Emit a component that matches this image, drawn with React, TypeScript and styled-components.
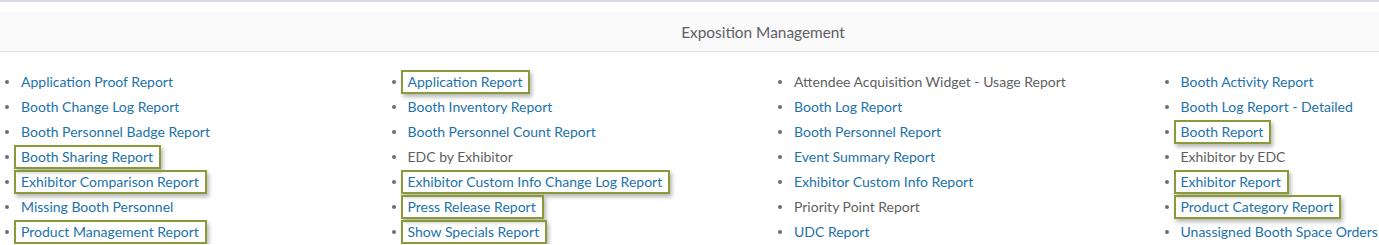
import React from 'react';
import styled, { createGlobalStyle } from 'styled-components';

type Item = { label: string; link?: boolean; marked?: boolean };

const columns: Item[][] = [
  [
    { label: 'Application Proof Report', link: true },
    { label: 'Booth Change Log Report', link: true },
    { label: 'Booth Personnel Badge Report', link: true },
    { label: 'Booth Sharing Report', link: true, marked: true },
    { label: 'Exhibitor Comparison Report', link: true, marked: true },
    { label: 'Missing Booth Personnel', link: true },
    { label: 'Product Management Report', link: true, marked: true },
  ],
  [
    { label: 'Application Report', link: true, marked: true },
    { label: 'Booth Inventory Report', link: true },
    { label: 'Booth Personnel Count Report', link: true },
    { label: 'EDC by Exhibitor' },
    { label: 'Exhibitor Custom Info Change Log Report', link: true, marked: true },
    { label: 'Press Release Report', link: true, marked: true },
    { label: 'Show Specials Report', link: true, marked: true },
  ],
  [
    { label: 'Attendee Acquisition Widget - Usage Report' },
    { label: 'Booth Log Report', link: true },
    { label: 'Booth Personnel Report', link: true },
    { label: 'Event Summary Report', link: true },
    { label: 'Exhibitor Custom Info Report', link: true },
    { label: 'Priority Point Report' },
    { label: 'UDC Report', link: true },
  ],
  [
    { label: 'Booth Activity Report', link: true },
    { label: 'Booth Log Report - Detailed', link: true },
    { label: 'Booth Report', link: true, marked: true },
    { label: 'Exhibitor by EDC' },
    { label: 'Exhibitor Report', link: true, marked: true },
    { label: 'Product Category Report', link: true, marked: true },
    { label: 'Unassigned Booth Space Orders', link: true },
  ],
];

export default function App() {
  return (
    <>
      <GlobalStyle />
      <SPage>
        <SSheet>
          <STopBar />
          <SHeader>Exposition Management</SHeader>
          <SGrid>
            {columns.map((col, i) => (
              <SList key={i}>
                {col.map((item) => (
                  <SItem key={item.label}>
                    <SLabel $link={item.link} $marked={item.marked}>
                      {item.label}
                    </SLabel>
                  </SItem>
                ))}
              </SList>
            ))}
          </SGrid>
        </SSheet>
      </SPage>
    </>
  );
}

const colors = {
  link: '#1c72aa',
  text: '#5f5f5f',
  bullet: '#6a6e72',
  headerBg: '#fafafa',
  headerBorder: '#dedede',
  topBar: '#d6dae3',
  mark: '#8a9a38',
};

const GlobalStyle = createGlobalStyle`
  html, body {
    margin: 0;
    padding: 0;
    background: #ffffff;
    overflow: hidden;
  }
  body {
    font-family: Lato, "Open Sans", sans-serif;
  }
`;

const SPage = styled.div`
  width: 100%;
  overflow: hidden;
`;

const SSheet = styled.div`
  width: 1546px;
`;

const STopBar = styled.div`
  height: 2px;
  background: ${colors.topBar};
  margin-bottom: 10px;
`;

const SHeader = styled.div`
  width: 1526px;
  height: 40px;
  box-sizing: border-box;
  background: ${colors.headerBg};
  border-bottom: 1px solid ${colors.headerBorder};
  display: flex;
  align-items: center;
  justify-content: center;
  color: #5e6066;
  font-size: 15.4px;
  padding-top: 1px;
`;

const SGrid = styled.div`
  display: grid;
  grid-template-columns: repeat(4, 386.5px);
  margin-top: 17px;
`;

const SList = styled.ul`
  list-style: none;
  margin: 0;
  padding: 0;
`;

const SItem = styled.li`
  display: flex;
  align-items: center;
  height: 25px;
  font-size: 14px;

  &::before {
    content: '';
    width: 4px;
    height: 4px;
    border-radius: 50%;
    background: ${colors.bullet};
    margin: 1px 12px 0 5px;
    flex: none;
  }
`;

const SLabel = styled.span<{ $link?: boolean; $marked?: boolean }>`
  color: ${(p) => (p.$link ? colors.link : colors.text)};
  white-space: nowrap;
  ${(p) =>
    p.$marked
      ? `
    margin-left: -7px;
    padding: 1px 6px 2px 5px;
    border: 2px solid ${colors.mark};
    box-shadow: 2px 3px 4px rgba(0, 0, 0, 0.28);
  `
      : ''}
`;
